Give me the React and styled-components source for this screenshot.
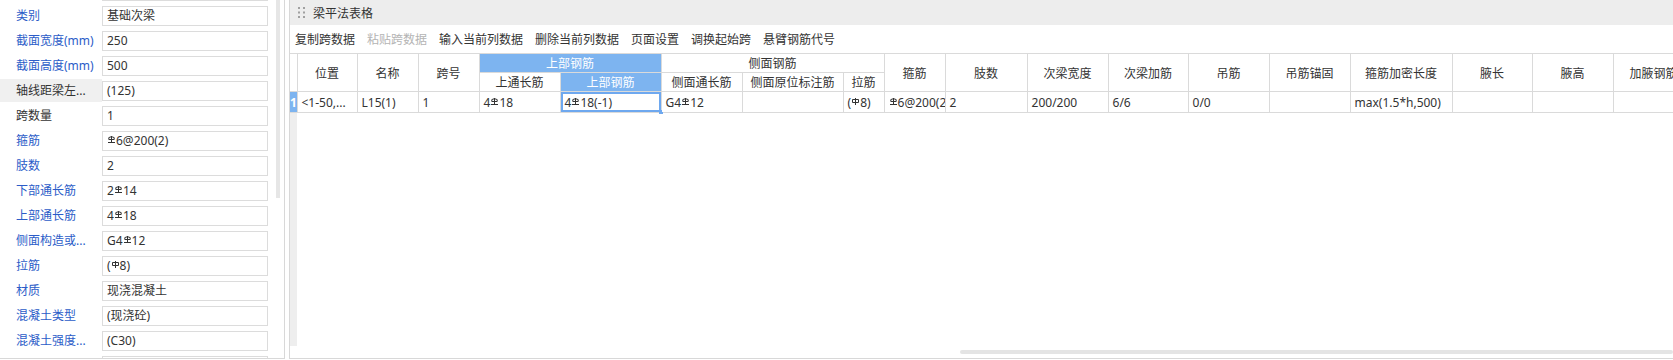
import React from 'react';
import styled, { createGlobalStyle } from 'styled-components';

const GlobalStyle = createGlobalStyle`
  html, body {
    margin: 0;
    padding: 0;
    background: #fff;
  }
  body {
    font-family: "Noto Sans", "Noto Sans CJK SC", sans-serif;
    font-size: 12px;
    color: #333;
  }
`;

const Page = styled.div`
  display: flex;
  gap: 4px;
  height: 359px;
`;

/* ---------- property panel ---------- */

const PropPanel = styled.aside`
  flex: none;
  width: 285px;
  box-sizing: border-box;
  border-right: 1px solid #d8d8d8;
  border-bottom: 1px solid #d8d8d8;
  display: flex;
  overflow: hidden;
`;

const PropList = styled.div`
  width: 274px;
  margin-top: -21px;
`;

const PropRow = styled.div`
  display: flex;
  align-items: flex-start;
  height: 25px;
`;

const PropLabel = styled.div`
  width: 102px;
  box-sizing: border-box;
  padding-left: 16px;
  height: 23px;
  line-height: 23px;
  white-space: nowrap;
  color: ${(p) => (p.$plain ? '#333' : '#2b5cc8')};
  background: ${(p) => (p.$active ? '#f0f0f0' : 'transparent')};
`;

const PropValue = styled.div`
  width: 166px;
  height: 20px;
  margin-top: 2px;
  box-sizing: border-box;
  border: 1px solid #dcdcdc;
  padding-left: 4px;
  line-height: 18px;
  white-space: nowrap;
  overflow: hidden;
  color: #333;
`;

const VTrack = styled.div`
  width: 9px;
  flex: none;
`;

const VThumb = styled.div`
  width: 4px;
  height: 198px;
  margin-left: 2px;
  background: #e6e6e6;
`;

/* ---------- table panel ---------- */

const TablePanel = styled.section`
  flex: 1;
  min-width: 0;
  box-sizing: border-box;
  border-left: 1px solid #d8d8d8;
  border-bottom: 1px solid #d8d8d8;
  display: flex;
  flex-direction: column;
  overflow: hidden;
`;

const PanelHeader = styled.div`
  flex: none;
  height: 25px;
  background: #ededed;
  display: flex;
  align-items: center;
  gap: 8px;
  padding-left: 8px;
  color: #333;
`;

const Grip = styled.svg`
  width: 7px;
  height: 11px;
  fill: #a0a0a0;
`;

const Toolbar = styled.div`
  flex: none;
  height: 28px;
  display: flex;
  align-items: center;
  gap: 12px;
  padding-left: 5px;
`;

const ToolButton = styled.span`
  white-space: nowrap;
  color: ${(p) => (p.$disabled ? '#b4b4b4' : '#333')};
  cursor: default;
`;

const GridBody = styled.div`
  flex: 1;
  overflow: hidden;
  background: linear-gradient(to right, #eeeeee 0 7px, #fff 7px);
`;

const Grid = styled.table`
  border-collapse: collapse;
  table-layout: fixed;
  width: ${(p) => p.$width}px;
`;

const HeadCell = styled.th`
  border: 1px solid #dadada;
  padding: 0;
  font-weight: normal;
  text-align: center;
  white-space: nowrap;
  overflow: hidden;
  color: ${(p) => (p.$hl ? '#fff' : '#333')};
  background: ${(p) => (p.$hl ? '#7db4f0' : '#fff')};
  ${(p) => p.$corner && 'border-left: none;'}
`;

const HeadRow = styled.tr`
  height: ${(p) => p.$h}px;
`;

const DataRow = styled.tr`
  height: 21px;
`;

const RowHead = styled.td`
  border: 1px solid #dadada;
  border-left: none;
  padding: 0;
  background: #7db4f0;
  color: #fff;
  text-align: center;
  font-weight: bold;
  overflow: hidden;
`;

const Cell = styled.td`
  position: relative;
  border: 1px solid #dadada;
  padding: 0 4px;
  background: #fff;
  white-space: nowrap;
  overflow: hidden;
  text-overflow: ${(p) => (p.$clip ? 'clip' : 'ellipsis')};
  ${(p) =>
    p.$selected &&
    `
    box-shadow: inset 0 0 0 2px #6ea8ef;
    overflow: visible;
    &::after {
      content: '';
      position: absolute;
      right: -2px;
      bottom: -2px;
      width: 4px;
      height: 4px;
      background: #6ea8ef;
    }
  `}
`;

const HScroll = styled.div`
  flex: none;
  height: 12px;
`;

const HThumb = styled.div`
  height: 4px;
  margin: 4px 0 0 670px;
  border-radius: 2px;
  background: #e4e4e4;
`;

const Mark = styled.svg`
  width: 7px;
  height: 7px;
  margin: 0 1px;
  vertical-align: 2px;
  fill: none;
  stroke: currentColor;
  stroke-width: 1;
`;

// 钢筋等级符号: C = HRB400, A = HPB300
const Rebar = ({ grade }) =>
  grade === 'A' ? (
    <Mark viewBox="0 0 7 7">
      <path d="M0.5 1.5 H6.5 V4.5 H0.5 Z M3.5 0 V7" />
    </Mark>
  ) : (
    <Mark viewBox="0 0 7 7">
      <path d="M0.8 3.5 V1.6 Q3.5 -0.3 6.2 1.6 V3.5 Z M3.5 0 V6.5 M0 6.5 H7" />
    </Mark>
  );

// "%C" / "%A" in a value mark a rebar grade symbol
const Steel = ({ text }) => {
  const parts = text.split(/(%[AC])/);
  return (
    <>
      {parts.map((part, i) =>
        part === '%C' ? <Rebar key={i} grade="C" /> : part === '%A' ? <Rebar key={i} grade="A" /> : part
      )}
    </>
  );
};

// first and last rows are scrolled out of view, only their box edges show
const props = [
  { id: 'top', label: '', value: '' },
  { label: '类别', value: '基础次梁' },
  { label: '截面宽度(mm)', value: '250' },
  { label: '截面高度(mm)', value: '500' },
  { label: '轴线距梁左...', value: '(125)', plain: true, active: true },
  { label: '跨数量', value: '1', plain: true },
  { label: '箍筋', value: '%C6@200(2)' },
  { label: '肢数', value: '2' },
  { label: '下部通长筋', value: '2%C14' },
  { label: '上部通长筋', value: '4%C18' },
  { label: '侧面构造或...', value: 'G4%C12' },
  { label: '拉筋', value: '(%A8)' },
  { label: '材质', value: '现浇混凝土' },
  { label: '混凝土类型', value: '(现浇砼)' },
  { label: '混凝土强度...', value: '(C30)' },
  { id: 'bottom', label: '', value: '' },
];

const tools = [
  { text: '复制跨数据' },
  { text: '粘贴跨数据', disabled: true },
  { text: '输入当前列数据' },
  { text: '删除当前列数据' },
  { text: '页面设置' },
  { text: '调换起始跨' },
  { text: '悬臂钢筋代号' },
];

const colWidths = [7, 60, 61, 61, 81, 101, 81, 101, 41, 61, 82, 81, 80, 81, 81, 102, 80, 81, 81, 81];

const singleHeads = ['箍筋', '肢数', '次梁宽度', '次梁加筋', '吊筋', '吊筋锚固', '箍筋加密长度', '腋长', '腋高', '加腋钢筋', ''];

const row = [
  { text: '<1-50,...' },
  { text: 'L15(1)' },
  { text: '1' },
  { text: '4%C18' },
  { text: '4%C18(-1)', selected: true },
  { text: 'G4%C12' },
  { text: '' },
  { text: '(%A8)' },
  { text: '%C6@200(2)', clip: true },
  { text: '2' },
  { text: '200/200' },
  { text: '6/6' },
  { text: '0/0' },
  { text: '' },
  { text: 'max(1.5*h,500)' },
  { text: '' },
  { text: '' },
  { text: '' },
  { text: '' },
];

const App = () => {
  const tableWidth = colWidths.reduce((a, b) => a + b, 0);

  return (
    <>
      <GlobalStyle />
      <Page>
        <PropPanel>
          <PropList>
            {props.map((p) => (
              <PropRow key={p.id || p.label}>
                <PropLabel $plain={p.plain} $active={p.active}>
                  {p.label}
                </PropLabel>
                <PropValue>
                  <Steel text={p.value} />
                </PropValue>
              </PropRow>
            ))}
          </PropList>
          <VTrack>
            <VThumb />
          </VTrack>
        </PropPanel>

        <TablePanel>
          <PanelHeader>
            <Grip viewBox="0 0 7 11">
              <rect x="0" y="0" width="2" height="2" />
              <rect x="5" y="0" width="2" height="2" />
              <rect x="0" y="4.5" width="2" height="2" />
              <rect x="5" y="4.5" width="2" height="2" />
              <rect x="0" y="9" width="2" height="2" />
              <rect x="5" y="9" width="2" height="2" />
            </Grip>
            <span>梁平法表格</span>
          </PanelHeader>

          <Toolbar>
            {tools.map((t) => (
              <ToolButton key={t.text} $disabled={t.disabled}>
                {t.text}
              </ToolButton>
            ))}
          </Toolbar>

          <GridBody>
            <Grid $width={tableWidth}>
              <colgroup>
                {colWidths.map((w, i) => (
                  <col key={i} style={{ width: w }} />
                ))}
              </colgroup>
              <thead>
                <HeadRow $h={18}>
                  <HeadCell rowSpan={2} $corner />
                  <HeadCell rowSpan={2}>位置</HeadCell>
                  <HeadCell rowSpan={2}>名称</HeadCell>
                  <HeadCell rowSpan={2}>跨号</HeadCell>
                  <HeadCell colSpan={2} $hl>
                    上部钢筋
                  </HeadCell>
                  <HeadCell colSpan={3}>侧面钢筋</HeadCell>
                  {singleHeads.map((h, i) => (
                    <HeadCell key={i} rowSpan={2}>
                      {h}
                    </HeadCell>
                  ))}
                </HeadRow>
                <HeadRow $h={16}>
                  <HeadCell>上通长筋</HeadCell>
                  <HeadCell $hl>上部钢筋</HeadCell>
                  <HeadCell>侧面通长筋</HeadCell>
                  <HeadCell>侧面原位标注筋</HeadCell>
                  <HeadCell>拉筋</HeadCell>
                </HeadRow>
              </thead>
              <tbody>
                <DataRow>
                  <RowHead>1</RowHead>
                  {row.map((c, i) => (
                    <Cell key={i} $selected={c.selected} $clip={c.clip}>
                      <Steel text={c.text} />
                    </Cell>
                  ))}
                </DataRow>
              </tbody>
            </Grid>
          </GridBody>

          <HScroll>
            <HThumb />
          </HScroll>
        </TablePanel>
      </Page>
    </>
  );
};

export default App;
